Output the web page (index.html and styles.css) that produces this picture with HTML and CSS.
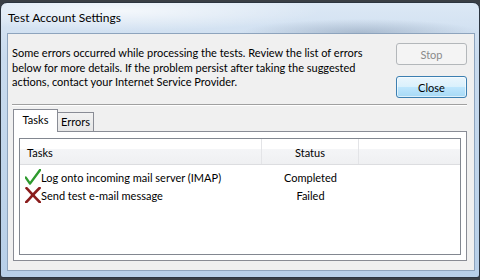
FILE: index.html
```html
<!DOCTYPE html>
<html>
<head>
<meta charset="utf-8">
<title>Test Account Settings</title>
<link rel="stylesheet" href="styles.css">
</head>
<body>
<div class="window">
  <div class="titlebar">Test Account Settings</div>
  <div class="client">
    <div class="top">
      <p class="msg">Some errors occurred while processing the tests. Review the list of errors<br>below for more details. If the problem persist after taking the suggested<br>actions, contact your Internet Service Provider.</p>
      <div class="buttons">
        <button class="btn disabled" type="button">Stop</button>
        <button class="btn default" type="button">Close</button>
      </div>
    </div>
    <div class="sep"></div>
    <div class="tabs">
      <div class="tab active">Tasks</div>
      <div class="tab">Errors</div>
    </div>
    <div class="panel">
      <div class="list">
        <div class="head">
          <div class="hc c1">Tasks</div>
          <div class="hc c2">Status</div>
          <div class="hc c3"></div>
        </div>
        <div class="rows">
          <div class="row">
            <div class="cell c1">
              <svg class="icon" viewBox="0 0 16 16" width="16" height="16"><path d="M0.8 8.6 L5 14.6 L15.2 0.8" fill="none" stroke="#2e9a2e" stroke-width="2.4" stroke-linecap="round" stroke-linejoin="round"/></svg>
              <span>Log onto incoming mail server (IMAP)</span>
            </div>
            <div class="cell c2">Completed</div>
          </div>
          <div class="row">
            <div class="cell c1">
              <svg class="icon" viewBox="0 0 16 16" width="16" height="16"><path d="M1.5 1.2 C6 6 10 10.5 14.8 15.2" fill="none" stroke="#8a1c1c" stroke-width="2.6" stroke-linecap="round"/><path d="M14.6 1 C10 5.5 6 10 1.2 15.2" fill="none" stroke="#8a1c1c" stroke-width="2.6" stroke-linecap="round"/></svg>
              <span>Send test e-mail message</span>
            </div>
            <div class="cell c2">Failed</div>
          </div>
        </div>
      </div>
    </div>
  </div>
</div>
</body>
</html>
```

FILE: styles.css
```css
* { box-sizing: border-box; }
html, body { margin: 0; padding: 0; }
body {
  width: 480px;
  height: 280px;
  overflow: hidden;
  background: #3a3f45;
  font-family: Lato, "Open Sans", sans-serif;
  font-size: 11px;
  color: #000;
}
.window {
  margin-top: 2px;
  height: 276px;
  border: 1px solid #2c3540;
  border-radius: 7px 7px 3px 3px;
  padding: 0 4px 6px 6px;
  background:
    radial-gradient(ellipse 120px 14px at 360px 30px, rgba(120,140,165,0.45), rgba(120,140,165,0) 100%),
    radial-gradient(ellipse 200px 20px at 120px 8px, rgba(255,255,255,0.7), rgba(255,255,255,0) 100%),
    linear-gradient(180deg, #dce8f5 0%, #c9dbee 20%, #b7cfe8 100%);
}
.titlebar {
  height: 30px;
  display: flex;
  align-items: center;
  padding: 0 0 2px 1px;
  font-size: 12px;
}
.client {
  height: 238px;
  border: 1px solid #8ea4bd;
  background: #f0f0f0;
  display: flex;
  flex-direction: column;
}
.top {
  height: 70px;
  display: flex;
}
.msg {
  flex: 1;
  margin: 0;
  padding: 12px 0 0 4px;
  line-height: 14.5px;
}
.buttons {
  display: flex;
  flex-direction: column;
  gap: 11px;
  padding-top: 9px;
  margin-right: 7px;
}
.btn {
  width: 71px;
  height: 22px;
  margin: 0;
  padding: 0;
  font: inherit;
  font-size: 11px;
  border-radius: 3px;
}
.btn.disabled {
  border: 1px solid #b3b7ba;
  background: #f4f4f4;
  color: #8a8a8a;
}
.btn.default {
  border: 1px solid #3c7fb1;
  background: linear-gradient(180deg, #eaf6fd 0%, #d9f0fc 50%, #bee6fd 51%, #a7d9f5 100%);
  box-shadow: inset 0 0 0 1px rgba(255,255,255,0.6);
  color: #000;
}
.sep {
  margin: 0 7px 0 4px;
  border-top: 1px solid #a0a0a0;
  border-bottom: 1px solid #ffffff;
}
.tabs {
  display: flex;
  align-items: flex-end;
  margin: 3px 0 0 5px;
}
.tab {
  height: 19px;
  width: 36px;
  border: 1px solid #898c95;
  border-left: none;
  border-bottom: none;
  background: linear-gradient(180deg, #f2f2f2 0%, #e6e6e6 100%);
  display: flex;
  align-items: center;
  justify-content: center;
  padding-bottom: 1px;
}
.tab.active {
  position: relative;
  z-index: 1;
  width: 45px;
  height: 23px;
  margin-bottom: -1px;
  border-left: 1px solid #898c95;
  background: #ffffff;
  padding-bottom: 3px;
}
.panel {
  margin: 0 7px 0 5px;
  height: 130px;
  border: 1px solid #898c95;
  background: #ffffff;
  padding: 6px 5px 5px 5px;
}
.list {
  height: 117px;
  border: 1px solid #828790;
  background: #ffffff;
}
.head {
  display: flex;
  height: 26px;
  border-bottom: 1px solid #dcdde0;
  background: linear-gradient(180deg, #ffffff 0%, #ffffff 40%, #f4f5f7 41%, #eff0f2 100%);
}
.hc {
  display: flex;
  align-items: center;
  padding-top: 1px;
}
.c1 { width: 242px; }
.c2 { width: 97px; justify-content: center; }
.c3 { width: 100px; }
.hc.c1 { padding-left: 7px; border-right: 1px solid #e3e4e7; }
.hc.c2 { border-right: 1px solid #e3e4e7; }
.rows { padding-top: 3px; }
.row {
  display: flex;
  height: 18px;
}
.cell {
  display: flex;
  align-items: center;
}
.cell.c1 { padding-left: 5px; }
.icon { flex: none; }
```
